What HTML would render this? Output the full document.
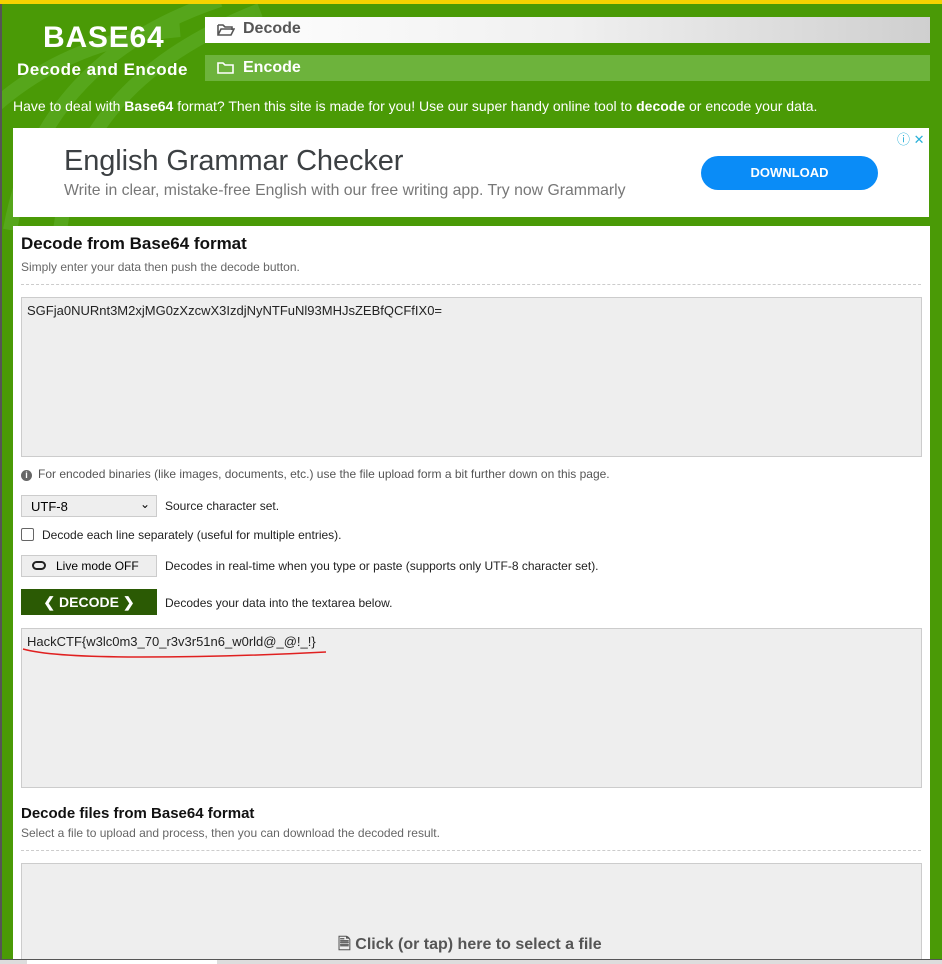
<!DOCTYPE html>
<html><head><meta charset="utf-8"><style>
*{box-sizing:border-box;margin:0;padding:0}
html,body{width:942px;height:964px;overflow:hidden}
body{background:#4a9a06;font-family:"Liberation Sans",Arial,sans-serif;position:relative}
.abs{position:absolute}
.top{left:0;top:0;width:942px;height:4px;background:#f6d300}
.lb{left:0;top:4px;width:2px;height:960px;background:#555}
.logo1{left:43px;top:21px;font-size:30px;font-weight:bold;color:#fff;letter-spacing:.8px}
.logo2{left:17px;top:60px;font-size:17px;font-weight:bold;color:#fff;letter-spacing:.5px}
.nav1{left:205px;top:17px;width:725px;height:26px;background:linear-gradient(90deg,#fff,#f0f0f0 50%,#cfcfcf);color:#555;font-weight:bold;font-size:16px;padding:3px 0 0 38px}
.nav2{left:205px;top:55px;width:725px;height:26px;background:#6db33c;color:#fff;font-weight:bold;font-size:16px;padding:4px 0 0 38px}
.intro{left:13px;top:98px;font-size:14px;color:#fff}
.ad{left:13px;top:128px;width:916px;height:89px;background:#fff}
.panel{left:13px;top:226px;width:917px;height:738px;background:#fff;overflow:hidden}
.h{font-weight:bold;color:#111}
.s{font-size:12px;color:#666}
.ta{background:#eee;border:1px solid #ccc}
.t13{font-size:12px;color:#222}
</style></head><body>
<svg class="abs" style="left:0;top:0" width="942" height="230"><g fill="none" stroke="#5fae2a" stroke-width="14" opacity=".6"><path d="M10 230 Q40 60 220 0"/><path d="M60 230 Q80 80 260 10"/><path d="M-20 120 Q60 40 180 30"/></g></svg>
<div class="abs top"></div><div class="abs lb"></div>
<div class="abs logo1">BASE64</div>
<div class="abs logo2">Decode and Encode</div>
<div class="abs nav1">Decode</div>
<svg class="abs" style="left:217px;top:23px" width="18" height="14"><path d="M1 2h5l2 2h7v3M1 2v10h13l3-6H4l-3 6" fill="none" stroke="#555" stroke-width="1.6"/></svg>
<div class="abs nav2">Encode</div>
<svg class="abs" style="left:217px;top:61px" width="18" height="14"><path d="M1 2h5l2 2h8v8H1z" fill="none" stroke="#fff" stroke-width="1.6"/></svg>
<div class="abs intro">Have to deal with <b>Base64</b> format? Then this site is made for you! Use our super handy online tool to <b>decode</b> or encode your data.</div>
<div class="abs ad">
 <div class="abs" style="left:51px;top:17px;font-size:29px;color:#3c4043;letter-spacing:-.1px">English Grammar Checker</div>
 <div class="abs" style="left:51px;top:54px;font-size:15.8px;color:#777">Write in clear, mistake-free English with our free writing app. Try now Grammarly</div>
 <div class="abs" style="left:688px;top:28px;width:177px;height:34px;border-radius:17px;background:#0a8cf7;color:#fff;font-weight:bold;font-size:13px;text-align:center;line-height:34px">DOWNLOAD</div>
 <div class="abs" style="left:884px;top:1px;font-size:13px;color:#2ab0d8">ⓘ ✕</div>
</div>
<div class="abs panel">
 <div class="abs h" style="left:8px;top:8px;font-size:17px">Decode from Base64 format</div>
 <div class="abs s" style="left:8px;top:34px">Simply enter your data then push the decode button.</div>
 <div class="abs" style="left:8px;top:58px;width:900px;border-top:1px dashed #ccc"></div>
 <div class="abs ta" style="left:8px;top:71px;width:901px;height:160px;padding:5px 5px;font-size:13px;color:#222">SGFja0NURnt3M2xjMG0zXzcwX3IzdjNyNTFuNl93MHJsZEBfQCFfIX0=</div>
 <div class="abs" style="left:8px;top:241px;font-size:12px;color:#555"><span style="display:inline-block;width:11px;height:11px;border-radius:50%;background:#666;color:#fff;font-size:9px;text-align:center;line-height:11px;font-weight:bold;margin-right:6px">i</span>For encoded binaries (like images, documents, etc.) use the file upload form a bit further down on this page.</div>
 <div class="abs" style="left:8px;top:269px;width:136px;height:22px;background:#eee;border:1px solid #ccc;font-size:13px;padding:3px 9px">UTF-8<span style="position:absolute;right:6px;top:1px;font-size:12px">⌄</span></div>
 <div class="abs t13" style="left:152px;top:273px">Source character set.</div>
 <div class="abs" style="left:8px;top:302px;width:13px;height:13px;border:1px solid #666;border-radius:2px;background:#fff"></div>
 <div class="abs t13" style="left:29px;top:302px">Decode each line separately (useful for multiple entries).</div>
 <div class="abs" style="left:8px;top:329px;width:136px;height:22px;background:#eee;border:1px solid #ccc;font-size:12px;padding:3px 0 0 34px">Live mode OFF</div>
 <div class="abs" style="left:19px;top:335px;width:14px;height:9px;border:2px solid #222;border-radius:5px"></div>
 <div class="abs t13" style="left:152px;top:333px">Decodes in real-time when you type or paste (supports only UTF-8 character set).</div>
 <div class="abs" style="left:8px;top:363px;width:136px;height:26px;background:#2b5a04;color:#fff;font-weight:bold;font-size:14px;text-align:center;line-height:26px">❮ DECODE ❯</div>
 <div class="abs t13" style="left:152px;top:370px">Decodes your data into the textarea below.</div>
 <div class="abs ta" style="left:8px;top:402px;width:901px;height:160px;padding:5px 5px;font-size:13px;color:#222">HackCTF{w3lc0m3_70_r3v3r51n6_w0rld@_@!_!}</div>
 <svg class="abs" style="left:8px;top:420px" width="310" height="14"><path d="M2 3 Q30 11 120 11 T305 6" fill="none" stroke="#e02020" stroke-width="1.5"/></svg>
 <div class="abs h" style="left:8px;top:579px;font-size:15px">Decode files from Base64 format</div>
 <div class="abs s" style="left:8px;top:600px">Select a file to upload and process, then you can download the decoded result.</div>
 <div class="abs" style="left:8px;top:624px;width:900px;border-top:1px dashed #ccc"></div>
 <div class="abs ta" style="left:8px;top:637px;width:901px;height:110px"></div>
 <div class="abs" style="left:325px;top:707px;font-size:16px;font-weight:bold;color:#555">🗎 Click (or tap) here to select a file</div>
</div>
<div class="abs" style="left:0;top:959px;width:942px;height:5px;background:#ddd;border-top:1px solid #555"></div>
<div class="abs" style="left:27px;top:960px;width:190px;height:4px;background:#fff"></div>
</body></html>
